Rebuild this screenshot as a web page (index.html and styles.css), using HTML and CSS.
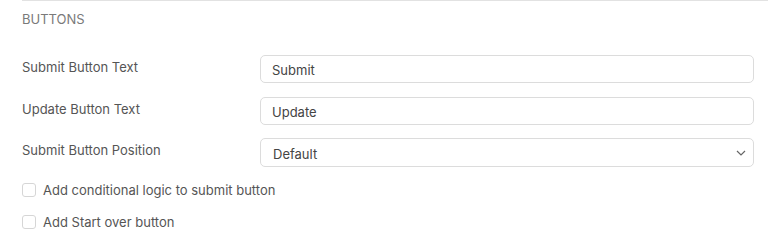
FILE: index.html
```html
<!DOCTYPE html>
<html lang="en">

<head>
  <meta charset="UTF-8">
  <meta name="viewport" content="width=device-width, initial-scale=1.0">
  <title>Buttons</title>
  <link rel="stylesheet" href="styles.css">
</head>

<body>
  <section class="Settings-Section">
    <h3 class="Section-Title">BUTTONS</h3>

    <div class="Field-Row">
      <label class="Field-Label" for="submit-text">Submit Button Text</label>
      <input class="Field-Input" id="submit-text" type="text" value="Submit">
    </div>

    <div class="Field-Row">
      <label class="Field-Label" for="update-text">Update Button Text</label>
      <input class="Field-Input" id="update-text" type="text" value="Update">
    </div>

    <div class="Field-Row is-Last">
      <label class="Field-Label" for="submit-pos">Submit Button Position</label>
      <div class="Select-Wrap">
        <select class="Field-Input is-Select" id="submit-pos">
          <option>Default</option>
          <option>Left</option>
          <option>Right</option>
        </select>
        <svg class="Select-Arrow" width="10" height="6" viewBox="0 0 10 6">
          <path d="M1 1l4 4 4-4" fill="none" stroke="#666" stroke-width="1.2" />
        </svg>
      </div>
    </div>

    <label class="Check-Row">
      <input type="checkbox" class="Check-Box">
      <span>Add conditional logic to submit button</span>
    </label>

    <label class="Check-Row">
      <input type="checkbox" class="Check-Box">
      <span>Add Start over button</span>
    </label>
  </section>
</body>

</html>
```

FILE: styles.css
```css
* {
  box-sizing: border-box;
}

body {
  margin: 0;
  background: #fff;
  font-family: Inter, "Liberation Sans", Arial, sans-serif;
  font-size: 13px;
  color: #555;
}

.Settings-Section {
  margin-left: 22px;
  padding-right: 14px;
  border-top: 1px solid #e2e2e2;
}

.Section-Title {
  margin: 0;
  padding-top: 9px;
  font-size: 13px;
  font-weight: normal;
  line-height: 18px;
  color: #7a7a7a;
}

.Field-Row {
  display: grid;
  grid-template-columns: 238px 1fr;
  align-items: start;
  margin-top: 14px;
}

.Settings-Section .Field-Row:first-of-type {
  margin-top: 27px;
}

.Field-Row.is-Last {
  margin-top: 13px;
}

.Field-Label {
  line-height: 18px;
  padding-top: 3px;
  color: #555;
}

.Field-Input {
  width: 100%;
  height: 28px;
  padding: 2px 11px 0;
  border: 1px solid #dcdcdc;
  border-radius: 5px;
  background: #fff;
  font-family: inherit;
  font-size: 13px;
  color: #444;
  outline: none;
}

.Select-Wrap {
  position: relative;
}

.Field-Input.is-Select {
  -webkit-appearance: none;
  appearance: none;
  height: 29px;
  padding-left: 12px;
}

.Select-Arrow {
  position: absolute;
  right: 8px;
  top: 12px;
  pointer-events: none;
}

.Check-Row {
  display: flex;
  align-items: center;
  gap: 7px;
  height: 18px;
  margin-top: 14px;
  color: #555;
}

.Settings-Section .Field-Row + .Check-Row {
  margin-top: 14px;
}

.Check-Box {
  -webkit-appearance: none;
  appearance: none;
  width: 14px;
  height: 14px;
  margin: 0;
  border: 1px solid #d6d6d6;
  border-radius: 3px;
  background: #fff;
}
```
